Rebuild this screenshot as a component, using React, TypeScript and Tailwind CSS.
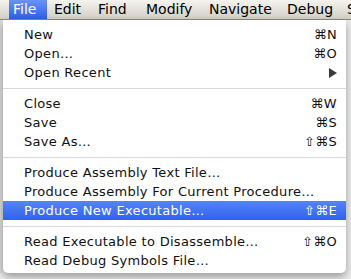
import React from "react";

type Item =
  | { sep: true }
  | { sep?: false; label: string; sc?: string; arrow?: boolean; hl?: boolean };

const items: Item[] = [
  { label: "New", sc: "⌘N" },
  { label: "Open…", sc: "⌘O" },
  { label: "Open Recent", arrow: true },
  { sep: true },
  { label: "Close", sc: "⌘W" },
  { label: "Save", sc: "⌘S" },
  { label: "Save As…", sc: "⇧⌘S" },
  { sep: true },
  { label: "Produce Assembly Text File…" },
  { label: "Produce Assembly For Current Procedure…" },
  { label: "Produce New Executable…", sc: "⇧⌘E", hl: true },
  { sep: true },
  { label: "Read Executable to Disassemble…", sc: "⇧⌘O" },
  { label: "Read Debug Symbols File…" },
];

const menus: { m: string; cls: string }[] = [
  { m: "File", cls: "w-[38px] ml-[9px] pl-[4px] text-white bg-gradient-to-b from-[#6a93f6] to-[#2d5de8]" },
  { m: "Edit", cls: "w-[44px] pl-[7px]" },
  { m: "Find", cls: "w-[48px] pl-[7px]" },
  { m: "Modify", cls: "w-[63px] pl-[7px]" },
  { m: "Navigate", cls: "w-[78px] pl-[7px]" },
  { m: "Debug", cls: "w-[60px] pl-[7px]" },
  { m: "S", cls: "w-[20px] pl-[7px]" },
];

export default function App() {
  return (
    <div
      className="relative w-[351px] h-[279px] overflow-hidden bg-[#ececec]"
      style={{ fontFamily: '"DejaVu Sans", "Lucida Grande", sans-serif' }}
    >
      <div className="flex h-[20px] items-stretch bg-gradient-to-b from-[#f4f3ee] to-[#d2d0c6] border-b border-[#8a8a80] text-[14px] text-black">
        {menus.map(({ m, cls }) => (
          <div key={m} className={"flex shrink-0 items-center whitespace-nowrap " + cls}>
            {m}
          </div>
        ))}
      </div>
      <div className="flex">
        <div className="w-[3px] bg-[#dcdcdc]" />
        <div className="w-[343px] bg-white pt-[5px] pb-[3px] rounded-b-[5px] shadow-[0_4px_8px_rgba(0,0,0,0.35)] text-[13px] tracking-[0.3px] text-[#111]">
          {items.map((it, i) =>
            it.sep ? (
              <div key={i} className="h-[12px] flex items-center">
                <div className="h-px w-full bg-[#d9d9d9]" />
              </div>
            ) : (
              <div
                key={i}
                className={
                  "h-[19px] flex items-center pl-[21px] pr-[9px] " +
                  (it.hl ? "bg-gradient-to-b from-[#5584f5] to-[#2f62ee] text-white" : "")
                }
              >
                <span className="flex-1 whitespace-nowrap">{it.label}</span>
                {it.sc && <span className="whitespace-nowrap">{it.sc}</span>}
                {it.arrow && (
                  <svg width="9" height="10" viewBox="0 0 9 10">
                    <path d="M1 0 L9 5 L1 10 Z" fill="#3a3a3a" />
                  </svg>
                )}
              </div>
            )
          )}
        </div>
      </div>
    </div>
  );
}
